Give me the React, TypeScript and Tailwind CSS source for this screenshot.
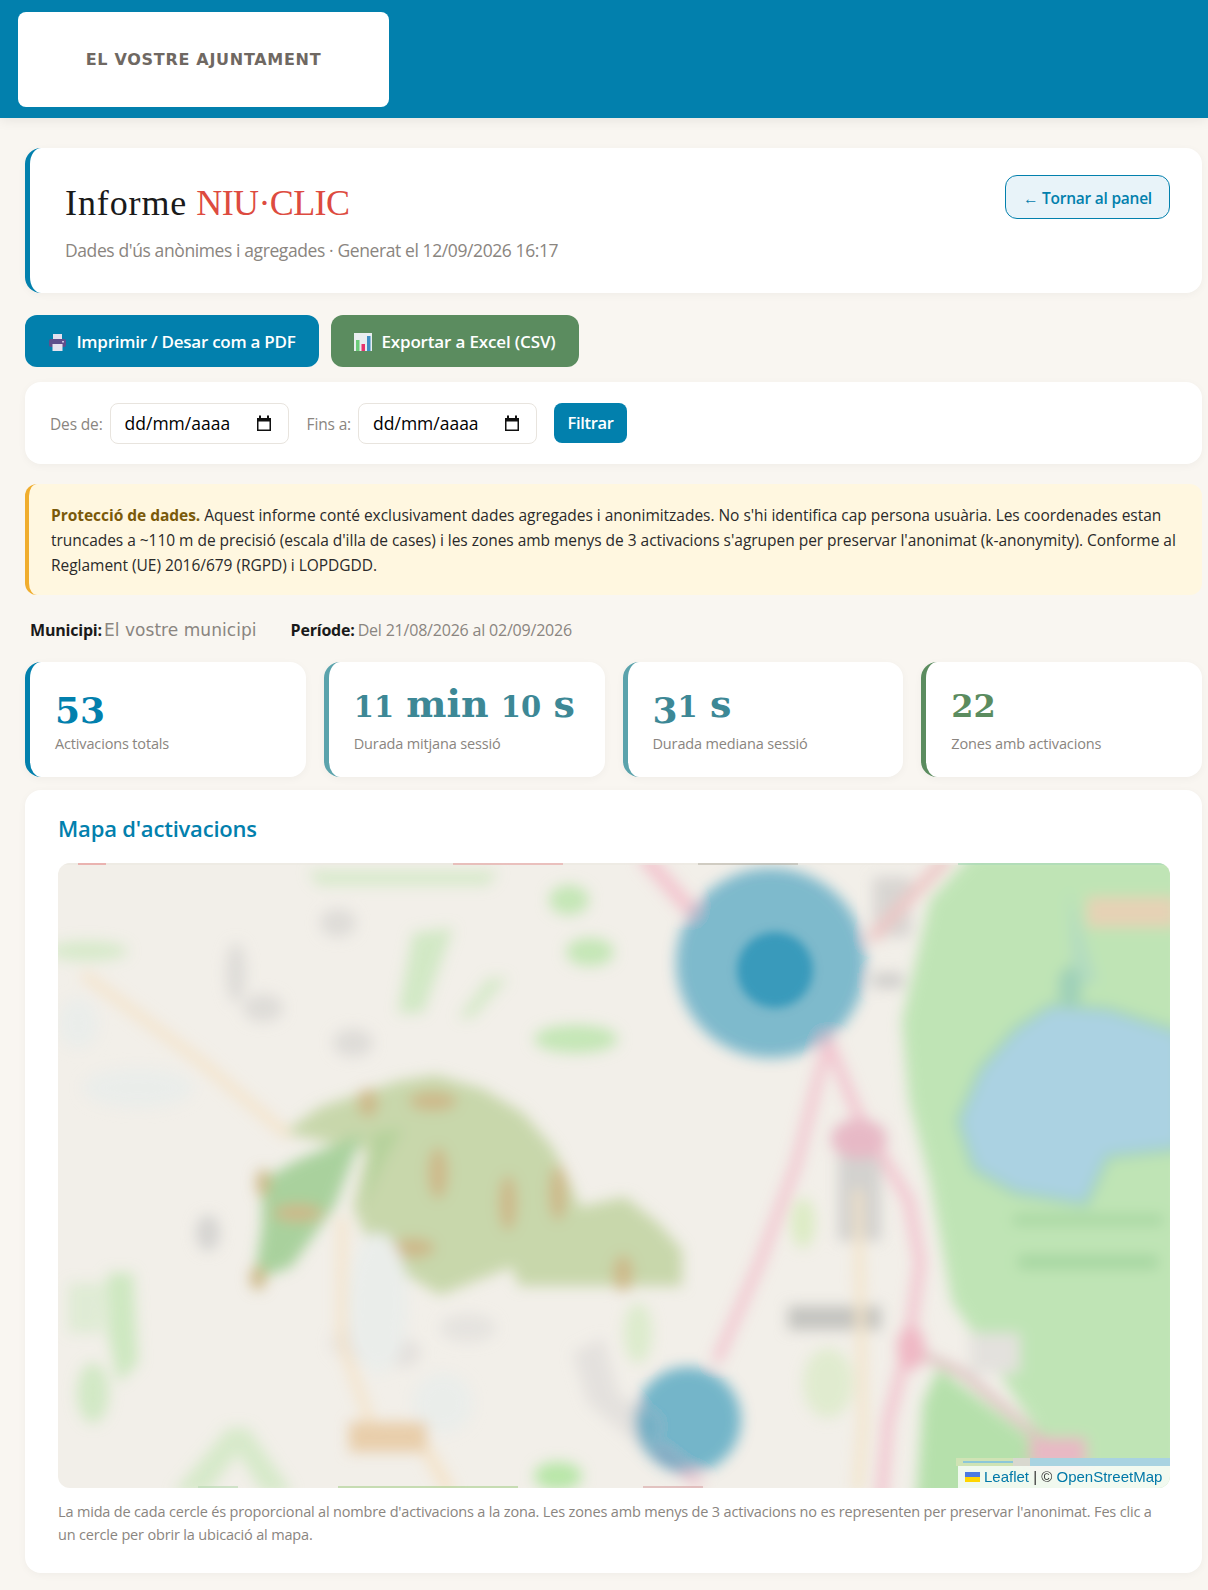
const sans = "font-['Open_Sans',sans-serif]";

function PrinterIcon() {
  return (
    <svg width="19" height="19" viewBox="0 0 19 19" className="shrink-0">
      <rect x="5" y="1" width="9" height="6" fill="#e2dfee" />
      <rect x="1" y="6" width="17" height="8" rx="2" fill="#5f4f8c" />
      <rect x="4.5" y="11" width="10" height="7" fill="#e6e3ef" />
      <rect x="14" y="8" width="2" height="1.5" fill="#c9c2de" />
    </svg>
  );
}

function ChartIcon() {
  return (
    <svg width="18" height="19" viewBox="0 0 18 19" className="shrink-0">
      <rect x="0" y="1" width="18" height="18" fill="#e9eef0" />
      <rect x="2" y="8" width="3.5" height="11" fill="#6ccb7a" />
      <rect x="7.5" y="12" width="3.5" height="7" fill="#e8336d" />
      <rect x="13" y="4" width="3.5" height="15" fill="#3f8fc4" />
    </svg>
  );
}

function CalendarIcon() {
  return (
    <svg width="16" height="17" viewBox="0 0 16 17" className="shrink-0">
      <path d="M1 3h14v13H1z M2.5 6.5v8h11v-8z" fill="#111" fillRule="evenodd" />
      <rect x="3" y="0.5" width="2" height="3" fill="#111" />
      <rect x="11" y="0.5" width="2" height="3" fill="#111" />
    </svg>
  );
}

function DateBox() {
  return (
    <div className="flex h-[41px] w-[179px] items-center justify-between rounded-lg border border-[#e8e4de] bg-white pl-[14px] pr-[16px] text-[17.5px] text-black">
      <span>dd/mm/aaaa</span>
      <CalendarIcon />
    </div>
  );
}

function Stat({ color, border, label, children }: { color: string; border: string; label: string; children: React.ReactNode }) {
  return (
    <div className={`h-[115px] rounded-2xl border-l-[5px] bg-white pl-[25px] pt-[20px] shadow-[0_2px_8px_rgba(0,0,0,0.04)] ${border}`}>
      <div className={`h-[44px] whitespace-nowrap font-['DejaVu_Serif',serif] text-[38px] font-bold leading-[44px] [word-spacing:-1px] ${color}`}>
        {children}
      </div>
      <div className="mt-[7px] text-[14.5px] tracking-[-0.15px] text-[#8a8580]">{label}</div>
    </div>
  );
}

function MapDrawing() {
  return (
    <svg viewBox="0 0 1112 625" className="block h-full w-full">
      <defs>
        <filter id="soft" x="-5%" y="-5%" width="110%" height="110%">
          <feGaussianBlur stdDeviation="7" />
        </filter>
        <filter id="softer" x="-30%" y="-30%" width="160%" height="160%">
          <feGaussianBlur stdDeviation="5" />
        </filter>
      </defs>
      <rect width="1112" height="625" fill="#f2efe9" />
      <g filter="url(#soft)">
        {/* park and lake */}
        <path d="M915 -10 L1125 -10 L1125 640 L1000 640 L993 590 L922 480 L894 439 L872 318 L851 238 L844 158 L872 37 Z" fill="#bfe4b5" />
        <path d="M880 505 L993 590 L1010 640 L858 640 L865 540 Z" fill="#b5e0ab" />
        <rect x="1029" y="34" width="90" height="30" fill="#e6d2b5" />
        <path d="M1010 25 L1040 120 L1015 120 Z" fill="#b3dcc0" />
        <ellipse cx="1012" cy="125" rx="12" ry="22" fill="#9fd0b8" />
        <path d="M993 142 L1050 146 L1125 170 L1125 286 L1050 294 L1028 342 L957 330 L915 306 L900 258 L922 206 L957 166 Z" fill="#abd2e2" stroke="#a3d3b6" strokeWidth="6" />
        <rect x="955" y="352" width="150" height="10" fill="#a5d6a0" />
        <rect x="960" y="392" width="140" height="14" fill="#a5d6a0" />

        {/* forest */}
        <path d="M225 270 L262 244 L298 232 L340 218 L378 212 L425 226 L465 250 L495 285 L512 320 L522 344 L567 334 L600 360 L624 387 L624 423 L461 423 L454 404 L382 432 L345 410 L313 384 L295 344 L309 287 Z" fill="#c8d7ab" />
        <path d="M240 297 L305 270 L276 344 L233 404 L196 417 L204 364 L204 317 Z" fill="#a9d19d" />
        <path d="M315 270 L345 265 L325 300 L305 345 Z" fill="#b5d29b" />
        <g fill="#cdb98a">
          <ellipse cx="310" cy="240" rx="10" ry="14" />
          <ellipse cx="375" cy="238" rx="24" ry="10" />
          <ellipse cx="380" cy="310" rx="10" ry="26" />
          <ellipse cx="450" cy="340" rx="9" ry="28" />
          <ellipse cx="500" cy="330" rx="9" ry="28" />
          <ellipse cx="355" cy="385" rx="22" ry="10" />
          <ellipse cx="565" cy="410" rx="10" ry="18" />
          <ellipse cx="240" cy="350" rx="25" ry="9" />
          <ellipse cx="205" cy="320" rx="7" ry="14" />
          <ellipse cx="200" cy="415" rx="8" ry="12" />
        </g>

        {/* small green areas */}
        <g fill="#c4e6b6">
          <ellipse cx="511" cy="37" rx="20" ry="15" />
          <ellipse cx="532" cy="89" rx="24" ry="14" />
          <ellipse cx="518" cy="176" rx="42" ry="14" />
          <ellipse cx="30" cy="88" rx="40" ry="10" opacity="0.6" />
          <path d="M355 70 L395 65 L365 150 L340 150 Z" opacity="0.7" />
          <path d="M430 115 L450 115 L415 155 L400 155 Z" opacity="0.6" />
          <path d="M250 8 L440 8 L430 22 L260 22 Z" opacity="0.6" />
          <path d="M50 410 L75 410 L80 500 L60 520 L50 470 Z" opacity="0.8" />
          <path d="M10 420 L50 420 L45 470 L10 470 Z" opacity="0.4" />
          <ellipse cx="35" cy="530" rx="16" ry="30" opacity="0.7" />
          <path d="M170 565 L190 565 L235 630 L205 630 L180 590 L150 630 L115 630 Z" opacity="0.6" />
          <ellipse cx="500" cy="613" rx="24" ry="14" fill="#b8e6a8" />
          <ellipse cx="745" cy="360" rx="12" ry="25" fill="#dcebc4" />
          <ellipse cx="770" cy="520" rx="25" ry="35" fill="#e0ebcf" />
          <ellipse cx="580" cy="470" rx="14" ry="30" fill="#dcebcc" />
        </g>

        {/* grey built-up patches */}
        <g fill="#dedcd8">
          <ellipse cx="205" cy="145" rx="20" ry="14" />
          <ellipse cx="295" cy="180" rx="20" ry="14" />
          <ellipse cx="280" cy="60" rx="18" ry="14" />
          <ellipse cx="150" cy="370" rx="12" ry="18" fill="#d5d4d1" />
          <ellipse cx="178" cy="110" rx="10" ry="30" />
          <ellipse cx="300" cy="480" rx="28" ry="18" opacity="0.6" />
          <ellipse cx="345" cy="490" rx="18" ry="14" opacity="0.7" />
          <ellipse cx="410" cy="465" rx="28" ry="14" opacity="0.6" />
          <path d="M515 490 L545 475 L560 530 L600 560 L590 590 L530 540 Z" opacity="0.7" />
          <rect x="780" y="290" width="43" height="88" fill="#d3d2cf" />
          <rect x="730" y="443" width="93" height="24" fill="#c4c4c0" />
          <rect x="815" y="14" width="38" height="60" fill="#d8d5d2" />
          <rect x="815" y="110" width="30" height="15" fill="#cfcecb" />
          <rect x="912" y="470" width="50" height="40" fill="#e3e1dd" />
        </g>
        <g fill="#eaedea">
          <ellipse cx="80" cy="225" rx="55" ry="20" />
          <ellipse cx="20" cy="160" rx="20" ry="25" />
          <ellipse cx="320" cy="440" rx="30" ry="70" />
          <ellipse cx="385" cy="540" rx="30" ry="30" />
        </g>

        {/* roads */}
        <g fill="none" strokeLinecap="round" strokeLinejoin="round">
          <path d="M28 113 L142 198 L227 270 M284 358 L284 479 L312 559" stroke="#f4e3c9" strokeWidth="9" />
          <path d="M370 590 L390 625" stroke="#f4e3c9" strokeWidth="12" />
          <path d="M770 178 L801 254 L851 338 L862 399 L851 479 L830 559 L823 640" stroke="#f2c4cf" strokeWidth="11" />
          <path d="M770 178 L738 302 L702 399 L660 495" stroke="#f2c4cf" strokeWidth="10" />
          <path d="M589 -3 L631 45" stroke="#f3c6cf" strokeWidth="15" />
          <path d="M887 -3 L816 73" stroke="#edc6c5" strokeWidth="12" />
          <path d="M800 330 L805 560 L800 625" stroke="#f3e2c5" strokeWidth="8" />
          <path d="M860 490 L905 510 L993 585" stroke="#d8b8b8" strokeWidth="7" />
          <path d="M640 620 L600 590" stroke="#f2c4cf" strokeWidth="9" />
        </g>
        <ellipse cx="801" cy="276" rx="28" ry="20" fill="#e7b9c6" />
        <ellipse cx="853" cy="485" rx="14" ry="22" fill="#efb7c4" />
        <rect x="972" y="575" width="56" height="30" fill="#e8b8c4" />
        <rect x="291" y="559" width="78" height="30" fill="#e8ceaa" />

        {/* activation circles */}
        <circle cx="713" cy="100" r="95" fill="#0280ad" fillOpacity="0.48" />
        <circle cx="630" cy="557" r="53" fill="#0280ad" fillOpacity="0.52" />
      </g>
      <circle cx="717" cy="107" r="38" fill="#0280ad" fillOpacity="0.55" filter="url(#softer)" />

      {/* sharp tile edges, top and bottom */}
      <g opacity="0.6">
        <rect x="0" y="0" width="1112" height="2" fill="#ebe8e2" />
        <rect x="20" y="0" width="28" height="2" fill="#e58a8a" />
        <rect x="395" y="0" width="110" height="2" fill="#e5a0a0" />
        <rect x="640" y="0" width="100" height="2" fill="#b9b4a8" />
        <rect x="900" y="0" width="212" height="2" fill="#a7d8b8" />
        <rect x="280" y="623" width="180" height="2" fill="#a9cf8d" />
        <rect x="585" y="623" width="60" height="2" fill="#d7a5a5" />
        <rect x="140" y="623" width="40" height="2" fill="#b7d8b0" />
      </g>
      {/* tile strip above the attribution */}
      <rect x="898" y="595" width="74" height="8" fill="#cfe3b4" />
      <rect x="905" y="598" width="50" height="2" fill="#8cc7d8" />
      <rect x="955" y="595" width="20" height="8" fill="#d8d8cf" />
      <rect x="972" y="595" width="140" height="8" fill="#a9d3e1" />
    </svg>
  );
}

export default function App() {
  return (
    <div className={`min-h-[1590px] bg-[#f9f6f1] text-[#1a1a1a] ${sans}`}>
      <header className="h-[118px] bg-[#0280ad] pl-[18px] pt-[12px] shadow-[0_2px_12px_rgba(0,0,0,0.08)]">
        <div className="flex h-[95px] w-[371px] items-center justify-center rounded-lg bg-white font-['DejaVu_Sans',sans-serif] text-[16px] font-bold tracking-[0.7px] text-[#6f6862]">
          EL VOSTRE AJUNTAMENT
        </div>
      </header>

      <main className="pl-[25px] pr-[6px] pt-[30px]">
        {/* Title card */}
        <section className="flex h-[145px] items-start justify-between rounded-2xl border-l-[5px] border-[#0280ad] bg-white pl-[35px] pr-[32px] shadow-[0_2px_8px_rgba(0,0,0,0.04)]">
          <div className="pt-[34px]">
            <h1 className="font-['Liberation_Serif',serif] text-[36px] font-normal leading-[42px]">
              <span className="tracking-[0.9px]">Informe</span> <span className="tracking-[-0.6px] text-[#dd4b40]">NIU·CLIC</span>
            </h1>
            <p className="mt-[13px] text-[17.5px] tracking-[-0.4px] text-[#8a8580]">
              Dades d'ús anònimes i agregades · Generat el 12/09/2026 16:17
            </p>
          </div>
          <a className="mt-[27px] flex h-[44px] w-[165px] items-center justify-center rounded-xl border border-[#0280ad] bg-[#e8f3f9] pt-[3px] text-[15.5px] font-semibold tracking-[-0.25px] text-[#0280ad]">
            ← Tornar al panel
          </a>
        </section>

        {/* Actions */}
        <div className="mt-[22px] flex gap-3">
          <button className="flex h-[52px] w-[294px] items-center justify-center gap-[9px] rounded-xl bg-[#0280ad] pt-[2px] text-[17px] font-semibold tracking-[-0.25px] text-white">
            <PrinterIcon />
            Imprimir / Desar com a PDF
          </button>
          <button className="flex h-[52px] w-[248px] items-center justify-center gap-[9px] rounded-xl bg-[#5b8c5f] pt-[1px] text-[17px] font-semibold tracking-[-0.15px] text-white">
            <ChartIcon />
            Exportar a Excel (CSV)
          </button>
        </div>

        {/* Filter */}
        <section className="mt-[15px] flex h-[82px] items-center rounded-2xl bg-white pl-[25px] shadow-[0_2px_8px_rgba(0,0,0,0.04)]">
          <span className="mr-[7px] pt-[3px] text-[15.5px] tracking-[-0.15px] text-[#8a8580]">Des de:</span>
          <DateBox />
          <span className="ml-[18px] mr-[7px] pt-[3px] text-[15.5px] tracking-[-0.15px] text-[#8a8580]">Fins a:</span>
          <DateBox />
          <button className="ml-[17px] h-[40px] w-[73px] rounded-lg bg-[#0280ad] text-[16.5px] font-semibold tracking-[-0.3px] text-white">
            Filtrar
          </button>
        </section>

        {/* Data protection notice */}
        <section className="mt-[20px] h-[111px] rounded-xl border-l-[4px] border-[#f0ad2e] bg-[#fff7e0] pl-[22px] pr-[20px] pt-[19px] text-[15.5px] leading-[25px] tracking-[-0.03px] text-[#2a2a2a]">
          <strong className="font-bold text-[#7a5a0a]">Protecció de dades.</strong> Aquest informe conté exclusivament dades agregades i anonimitzades. No s'hi identifica cap persona usuària. Les coordenades estan truncades a ~110 m de precisió (escala d'illa de cases) i les zones amb menys de 3 activacions s'agrupen per preservar l'anonimat (k-anonymity). Conforme al Reglament (UE) 2016/679 (RGPD) i LOPDGDD.
        </section>

        {/* Meta */}
        <div className="mt-[23px] flex h-[24px] items-center pl-[5px] text-[16px] tracking-[-0.2px]">
          <strong className="font-bold text-[#1a1a1a]">Municipi:</strong>
          <span className="ml-[2px] pt-[2px] font-['DejaVu_Sans',sans-serif] text-[17px] tracking-[0.05px] text-[#8a8580]">El vostre municipi</span>
          <strong className="ml-[34px] font-bold text-[#1a1a1a]">Període:</strong>
          <span className="ml-[3px] text-[#8a8580]">Del 21/08/2026 al 02/09/2026</span>
        </div>

        {/* Stats */}
        <div className="mt-[20px] grid grid-cols-4 gap-[18px]">
          <Stat color="text-[#0280ad]" border="border-[#0280ad]" label="Activacions totals">
            <span className="align-[-6px] text-[36px]">53</span>
          </Stat>
          <Stat color="text-[#3d8896]" border="border-[#5ba3ac]" label="Durada mitjana sessió">
            <span className="text-[29px]">11</span> min <span className="text-[29px]">10</span> s
          </Stat>
          <Stat color="text-[#3d8896]" border="border-[#5ba3ac]" label="Durada mediana sessió">
            <span className="align-[-6px] text-[36px]">3</span>
            <span className="text-[29px]">1</span> s
          </Stat>
          <Stat color="text-[#5b8c5f]" border="border-[#5b8c5f]" label="Zones amb activacions">
            <span className="text-[32px]">22</span>
          </Stat>
        </div>

        {/* Map */}
        <section className="mt-[13px] h-[783px] rounded-2xl bg-white pl-[33px] pr-[32px] pt-[23px] shadow-[0_2px_8px_rgba(0,0,0,0.04)]">
          <h2 className="text-[22px] font-semibold leading-[30px] tracking-[-0.2px] text-[#0280ad]">Mapa d'activacions</h2>
          <div className="relative mt-[20px] h-[625px] overflow-hidden rounded-xl">
            <MapDrawing />
            <div className="absolute bottom-0 right-0 flex h-[22px] w-[212px] items-center gap-[4px] bg-white/80 pl-[7px] font-['Liberation_Sans',sans-serif] text-[15px] text-[#333]">
              <svg width="15" height="10" viewBox="0 0 15 10" className="shrink-0">
                <rect width="15" height="5" fill="#4c7be1" />
                <rect y="5" width="15" height="5" fill="#ffd500" />
              </svg>
              <span className="whitespace-nowrap">
                <span className="text-[#0078a8]">Leaflet</span> | © <span className="text-[#0078a8]">OpenStreetMap</span>
              </span>
            </div>
          </div>
          <p className="mt-[12px] text-[14.5px] leading-[23px] tracking-[-0.17px] text-[#8a8580]">
            La mida de cada cercle és proporcional al nombre d'activacions a la zona. Les zones amb menys de 3 activacions no es representen per preservar l'anonimat. Fes clic a un cercle per obrir la ubicació al mapa.
          </p>
        </section>
      </main>
    </div>
  );
}
